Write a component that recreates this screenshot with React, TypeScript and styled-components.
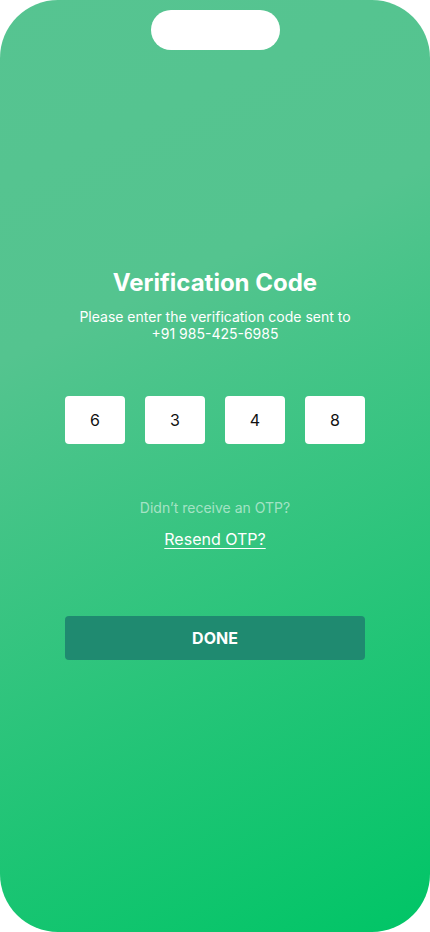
import React from "react";
import styled, { createGlobalStyle } from "styled-components";

const Global = createGlobalStyle`
  html, body { margin: 0; padding: 0; background: #ffffff; }
  body { font-family: Inter, "Noto Sans", sans-serif; }
  * { box-sizing: border-box; }
`;

const Phone = styled.div`
  width: 430px;
  height: 932px;
  border-radius: 58px;
  overflow: hidden;
  background: linear-gradient(155deg, #56c491 0%, #54c48f 32%, #00c566 100%);
  display: flex;
  flex-direction: column;
  align-items: center;
  padding-top: 10px;
  color: #ffffff;
`;

const Notch = styled.div`
  width: 129px;
  height: 40px;
  border-radius: 20px;
  background: #ffffff;
`;

const Content = styled.div`
  display: flex;
  flex-direction: column;
  align-items: center;
  margin-top: 218px;
  width: 300px;
`;

const Title = styled.h1`
  margin: 0;
  font-size: 24px;
  font-weight: 700;
  line-height: 30px;
`;

const Subtitle = styled.p`
  margin: 10px 0 0;
  font-size: 14px;
  line-height: 17px;
  text-align: center;
  width: 340px;
`;

const CodeRow = styled.div`
  display: flex;
  gap: 20px;
  margin-top: 54px;
`;

const CodeBox = styled.div`
  width: 60px;
  height: 48px;
  border-radius: 4px;
  background: #ffffff;
  color: #111111;
  font-size: 16px;
  display: flex;
  align-items: center;
  justify-content: center;
`;

const Hint = styled.p`
  margin: 55px 0 0;
  font-size: 14px;
  line-height: 17px;
  color: rgba(255, 255, 255, 0.55);
`;

const Resend = styled.a`
  margin-top: 13px;
  font-size: 16px;
  line-height: 20px;
  color: #ffffff;
  text-decoration: underline;
  text-underline-offset: 3px;
`;

const DoneButton = styled.button`
  margin-top: 67px;
  width: 300px;
  height: 44px;
  border: none;
  border-radius: 4px;
  background: #1f8a70;
  color: #ffffff;
  font-family: Inter, "Noto Sans", sans-serif;
  font-size: 16px;
  font-weight: 700;
`;

export default function App() {
  const digits = ["6", "3", "4", "8"];
  return (
    <>
      <Global />
      <Phone>
        <Notch />
        <Content>
          <Title>Verification Code</Title>
          <Subtitle>
            Please enter the verification code sent to
            <br />
            +91 985-425-6985
          </Subtitle>
          <CodeRow>
            {digits.map((d, i) => (
              <CodeBox key={i}>{d}</CodeBox>
            ))}
          </CodeRow>
          <Hint>Didn’t receive an OTP?</Hint>
          <Resend>Resend OTP?</Resend>
          <DoneButton>DONE</DoneButton>
        </Content>
      </Phone>
    </>
  );
}
